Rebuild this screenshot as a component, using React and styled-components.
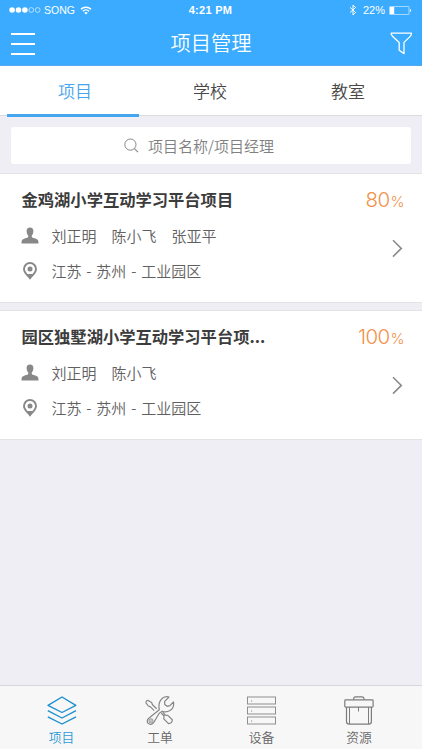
import React from "react";
import styled, { createGlobalStyle } from "styled-components";

const projects = [
  {
    title: "金鸡湖小学互动学习平台项目",
    people: "刘正明　陈小飞　张亚平",
    place: "江苏 - 苏州 - 工业园区",
    percent: 80,
  },
  {
    title: "园区独墅湖小学互动学习平台项...",
    people: "刘正明　陈小飞",
    place: "江苏 - 苏州 - 工业园区",
    percent: 100,
  },
];

const App = () => {
  return (
    <Screen>
      <GlobalStyle />
      <Header>
        <StatusBar>
          <StatusLeft>
            <Signal />
            <Carrier>SONG</Carrier>
            <WifiIcon />
          </StatusLeft>
          <Time>4:21 PM</Time>
          <StatusRight>
            <BluetoothIcon />
            <Battery>22%</Battery>
            <BatteryIcon />
          </StatusRight>
        </StatusBar>
        <NavBar>
          <MenuButton aria-label="menu">
            <MenuLine />
            <MenuLine />
            <MenuLine />
          </MenuButton>
          <Title>项目管理</Title>
          <FilterIcon />
        </NavBar>
      </Header>
      <Tabs>
        <Tab $width={136} $active>
          项目
        </Tab>
        <Tab $width={134}>学校</Tab>
        <Tab $width={142}>教室</Tab>
      </Tabs>
      <SearchArea>
        <SearchBox>
          <SearchIcon />
          <SearchText>项目名称/项目经理</SearchText>
        </SearchBox>
      </SearchArea>
      <List>
        {projects.map((project) => (
          <Card key={project.title}>
            <CardBody>
              <CardTitle>{project.title}</CardTitle>
              <Row>
                <PersonIcon />
                <RowText>{project.people}</RowText>
              </Row>
              <Row>
                <PinIcon />
                <RowText>{project.place}</RowText>
              </Row>
            </CardBody>
            <CardSide>
              <Percent>
                {project.percent}
                <PercentSign>%</PercentSign>
              </Percent>
              <Chevron />
            </CardSide>
          </Card>
        ))}
      </List>
      <Footer>
        <FooterItem $width={123} $active>
          <LayersIcon />
          <Label>项目</Label>
        </FooterItem>
        <FooterItem $width={74}>
          <ToolsIcon />
          <Label>工单</Label>
        </FooterItem>
        <FooterItem $width={129}>
          <ServerIcon />
          <Label>设备</Label>
        </FooterItem>
        <FooterItem $width={66}>
          <CaseIcon />
          <Label>资源</Label>
        </FooterItem>
      </Footer>
    </Screen>
  );
};

const Signal = () => (
  <svg width="32" height="8" viewBox="0 0 32 8">
    <g fill="#fff">
      <circle cx="3.1" cy="4" r="2.8" />
      <circle cx="9.5" cy="4" r="2.8" />
      <circle cx="15.9" cy="4" r="2.8" />
    </g>
    <g fill="none" stroke="#fff" strokeWidth="0.6">
      <circle cx="22.3" cy="4" r="2.4" />
      <circle cx="28.7" cy="4" r="2.4" />
    </g>
  </svg>
);

const WifiIcon = () => (
  <svg width="12" height="9" viewBox="0 0 12 9" fill="none" stroke="#fff">
    <path d="M0.9 3.3a7.2 7.2 0 0 1 10.2 0" strokeWidth="1.5" />
    <path d="M2.8 5.2a4.5 4.5 0 0 1 6.4 0" strokeWidth="1.3" />
    <path d="M6 8.6L4.2 6.8a2.6 2.6 0 0 1 3.6 0z" fill="#fff" stroke="none" />
  </svg>
);

const BluetoothIcon = () => (
  <svg width="8" height="12" viewBox="0 0 8 12" fill="none" stroke="#fff">
    <path d="M1 3.4L6.6 8.5L4 11V1L6.6 3.5L1 8.6" strokeWidth="1" />
  </svg>
);

const BatteryIcon = () => (
  <svg width="23" height="9" viewBox="0 0 23 9">
    <rect
      x="0.4"
      y="0.4"
      width="19.6"
      height="8.2"
      rx="1"
      fill="none"
      stroke="#fff"
      strokeWidth="0.6"
    />
    <rect x="1" y="1" width="4.2" height="7" fill="#fff" />
    <path d="M21 3v3a1.6 1.6 0 0 0 0-3z" fill="#fff" />
  </svg>
);

const FilterIcon = () => (
  <svg width="23" height="23" viewBox="0 0 23 23" fill="none" stroke="#fff">
    <path
      d="M1.2 1.2h20.2c.2 2-.5 2.5-1.4 3.4l-6 5.8v11.2l-4.8-3.4v-7.8l-6.4-5.8c-1-.9-1.7-1.6-1.6-3.4z"
      strokeWidth="1.3"
      strokeLinejoin="round"
    />
  </svg>
);

const SearchIcon = () => (
  <svg width="15" height="15" viewBox="0 0 15 15" fill="none" stroke="#888">
    <circle cx="6.4" cy="6.6" r="5.6" strokeWidth="1" />
    <path d="M10.4 10.6l3.6 3.6" strokeWidth="1.1" />
  </svg>
);

const PersonIcon = () => (
  <svg width="18" height="17" viewBox="0 0 18 17" fill="#888">
    <path d="M9 0.4c2.3 0 3.5 1.5 3.4 3.6c-.1 2-.7 3.6-1.7 4.7c-.2 1.4.5 1.9 1.9 2.4c2.6.9 4.6 1.3 4.8 3.3l.1 2.2H.5l.1-2.2c.2-2 2.2-2.4 4.8-3.3c1.4-.5 2.1-1 1.9-2.4c-1-1.1-1.6-2.7-1.7-4.7c-.1-2.1 1.1-3.6 3.4-3.6z" />
  </svg>
);

const PinIcon = () => (
  <svg width="18" height="18" viewBox="0 0 18 18">
    <path
      d="M9 16.1C7.2 13.6 3 11.2 3 7a6 6 0 0 1 12 0c0 4.200-4.200 6.600-6 9.100z"
      fill="none"
      stroke="#888"
      strokeWidth="1.9"
    />
    <path d="M5.500 12h7L9 17z" fill="#888" />
    <circle cx="9" cy="7" r="2.5" fill="#888" />
  </svg>
);

const Chevron = () => (
  <svg width="11" height="19" viewBox="0 0 11 19" fill="none" stroke="#8a8a8a">
    <path d="M1 1.2l8.3 8.2l-8.3 8.2" strokeWidth="1.6" />
  </svg>
);

const LayersIcon = () => (
  <svg
    width="30"
    height="29"
    viewBox="0 0 30 29"
    fill="none"
    stroke="#1b8fd0"
    strokeWidth="1.4"
    strokeLinejoin="round"
  >
    <path d="M15 1L28.8 9.3L15 16.5L1 9.3z" />
    <path d="M0.8 14.7L15 22L29 14.7" />
    <path d="M0.8 20.8L15 28L29 20.8" />
  </svg>
);

const ToolsIcon = () => (
  <svg
    width="30"
    height="29"
    viewBox="0 0 30 29"
    fill="none"
    stroke="#858585"
    strokeWidth="1.2"
    strokeLinejoin="round"
  >
    <path d="M9.2 14.6L5.5 10.9L3.3 10L1 6.8C.6 5.7 1.9 4.2 3.2 4.5L6.6 6.6L7.5 8.8L11.7 12.8" />
    <path d="M14.2 17.2L8.6 26.7C7.3 28.7 4.7 28.9 3.2 27.4C1.7 25.9 2 23.5 3.8 22.2L14.3 13.7C13.4 8.8 14.2 4.9 17.4 2.3C19.4.8 21.8.4 24 1L19.7 5.3V8.5L22.1 10.3L24.9 9.7L28.5 6C29.1 9.4 27.8 12.7 25 14.5C22.4 16 19.6 16.1 17.3 15.2z" />
    <circle cx="6" cy="24.8" r="2" fill="#c4c4c4" stroke="#aaa" />
    <path d="M16.3 17.3L19 19.8L18.8 22.8L23.5 27.6C25.7 27.7 27.3 26.3 27.3 23.8L22.8 19.4L20.2 19.2L17.8 15.9" />
  </svg>
);

const ServerIcon = () => (
  <svg
    width="29"
    height="28"
    viewBox="0 0 29 28"
    fill="none"
    stroke="#8f8f8f"
    strokeWidth="1"
  >
    <rect x="0.5" y="0.5" width="28" height="7" />
    <rect x="0.5" y="10.5" width="28" height="7" />
    <rect x="0.5" y="20.5" width="28" height="7" />
    <path d="M4 4.5h1.2M4 14.5h1.2M4 24.5h1.2" />
  </svg>
);

const CaseIcon = () => (
  <svg
    width="30"
    height="29"
    viewBox="0 0 30 29"
    fill="none"
    stroke="#7d7d7d"
    strokeWidth="1.2"
  >
    <path d="M9.5 3.7c.1-2 .6-2.9 2-2.9h6.5c1.4 0 2 .9 2.2 2.9" />
    <rect x="0.8" y="3.9" width="28.3" height="7.2" rx="0.8" />
    <path d="M2.5 11v14.5c0 1.8 1 2.7 2.6 2.7h19.6c1.7 0 2.7-.9 2.7-2.7V11" />
    <path d="M5.5 11v17M24.5 11v17M14.5 11v4.5" strokeWidth="1" />
  </svg>
);

const GlobalStyle = createGlobalStyle`
  body {
    margin: 0;
    background: #efeef4;
    font-family: "Noto Sans CJK SC", sans-serif;
    font-weight: 350;
  }
  svg {
    display: block;
    flex-shrink: 0;
  }
`;

const Screen = styled.div`
  display: flex;
  flex-direction: column;
  width: 422px;
  height: 750px;
  overflow: hidden;
  background: #efeef4;
`;

const Header = styled.header`
  height: 66px;
  box-sizing: border-box;
  color: #fff;
  background: #3aabff;
  border-bottom: 1px solid #55a9ec;
`;

const StatusBar = styled.div`
  display: grid;
  grid-template-columns: 1fr auto 1fr;
  align-items: center;
  height: 20px;
  padding: 0 10px 0 9px;
  font-family: "Liberation Sans", sans-serif;
  font-size: 11px;
`;

const StatusLeft = styled.div`
  display: flex;
  align-items: center;
`;

const Carrier = styled.span`
  margin: 0 5px 0 3px;
  font-size: 10.5px;
`;

const Time = styled.span`
  font-weight: bold;
  font-size: 11px;
  letter-spacing: 0.3px;
`;

const StatusRight = styled.div`
  display: flex;
  align-items: center;
  justify-content: flex-end;
`;

const Battery = styled.span`
  margin: 0 4px 0 6px;
`;

const NavBar = styled.div`
  display: grid;
  grid-template-columns: 1fr auto 1fr;
  align-items: center;
  height: 45px;
  padding: 0 9px 0 11px;

  > svg {
    margin-top: 2px;
    justify-self: end;
  }
`;

const MenuButton = styled.button`
  display: flex;
  flex-direction: column;
  justify-content: space-between;
  width: 24px;
  height: 22px;
  margin-top: 2px;
  padding: 0;
  border: 0;
  background: none;
`;

const MenuLine = styled.span`
  height: 2px;
  background: #fff;
`;

const Title = styled.h1`
  margin: 0 2px 1px 0;
  font-size: 20.3px;
  font-weight: 350;
  line-height: 30px;
`;

const Tabs = styled.nav`
  display: flex;
  height: 51px;
  box-sizing: border-box;
  padding: 0 3px 0 7px;
  background: linear-gradient(#fff 49px, #dcdce0 49px, #dcdce0 50px, #efeef4 50px);
`;

const Tab = styled.div`
  width: ${(props) => props.$width}px;
  color: ${(props) => (props.$active ? "#45a5ee" : "#484848")};
  background: ${(props) =>
    props.$active
      ? "linear-gradient(#45a5ee, #45a5ee) 0 100% / 132px 3px no-repeat"
      : "none"};
  font-size: 17px;
  line-height: 50px;
  text-align: center;
`;

const SearchArea = styled.div`
  padding: 10px 11px 9px;
`;

const SearchBox = styled.div`
  display: flex;
  align-items: center;
  height: 37px;
  box-sizing: border-box;
  padding-left: 113px;
  border-radius: 3px;
  background: #fff;
`;

const SearchText = styled.span`
  margin-left: 9px;
  color: #808080;
  font-size: 15px;
`;

const List = styled.main`
  display: flex;
  flex: 1;
  flex-direction: column;
  gap: 7px;
`;

const Card = styled.section`
  display: flex;
  justify-content: space-between;
  height: 130px;
  box-sizing: border-box;
  padding: 0 18px 0 21.5px;
  border-top: 1px solid #e3e3e6;
  border-bottom: 1px solid #e3e3e6;
  background: #fff;
`;

const CardBody = styled.div`
  padding-top: 13px;
`;

const CardTitle = styled.h2`
  margin: 0 0 7px;
  color: #3c3c3c;
  font-size: 16.3px;
  font-weight: 700;
  line-height: 24px;
  white-space: nowrap;
`;

const Row = styled.div`
  display: flex;
  align-items: center;
  height: 35px;

  > svg {
    margin-left: -0.5px;
  }
`;

const RowText = styled.span`
  margin-left: 12.5px;
  color: #606060;
  font-size: 15px;
  white-space: nowrap;
  word-spacing: 1.5px;
`;

const CardSide = styled.div`
  display: flex;
  flex-direction: column;
  align-items: flex-end;
  padding-top: 14px;

  > svg {
    margin-right: 1px;
  }
`;

const Percent = styled.div`
  margin-bottom: 25px;
  color: #f0924a;
  font-family: Inter, sans-serif;
  font-size: 20.5px;
  font-weight: 300;
  letter-spacing: -0.6px;
  line-height: 24px;
`;

const PercentSign = styled.span`
  margin-left: 1px;
  font-size: 15px;
`;

const Footer = styled.footer`
  display: flex;
  height: 65px;
  box-sizing: border-box;
  border-top: 1px solid #d6d6dc;
  border-bottom: 1px solid #fff;
  background: #f7f7f7;
`;

const FooterItem = styled.div`
  display: flex;
  flex-direction: column;
  align-items: center;
  width: ${(props) => props.$width}px;
  padding-top: 10px;
  color: ${(props) => (props.$active ? "#2f9ad6" : "#686868")};

  > svg {
    height: 29px;
  }
`;

const Label = styled.span`
  margin-top: 2px;
  font-size: 12.8px;
  line-height: 19px;
`;

export default App;
